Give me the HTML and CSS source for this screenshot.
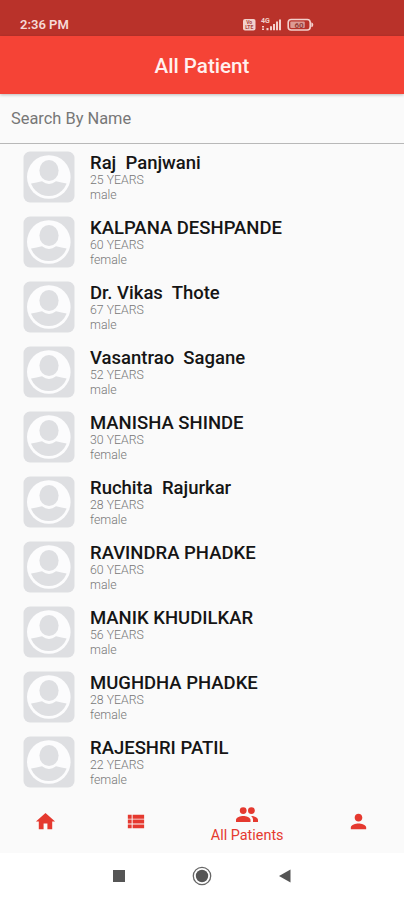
FILE: index.html
```html
<!DOCTYPE html>
<html lang="en">
<head>
<meta charset="utf-8">
<title>All Patient</title>
<link rel="stylesheet" href="styles.css">
</head>
<body>
<svg class="defs" aria-hidden="true">
  <symbol id="avatar" viewBox="0 0 52 52">
    <rect x=".5" y=".5" width="51" height="51" rx="6.5" fill="#dedfe2"/>
    <circle cx="25.8" cy="26" r="21.8" fill="#fcfcfd"/>
    <clipPath id="disc"><circle cx="25.8" cy="26.3" r="18.8"/></clipPath>
    <g fill="#dedfe2">
      <ellipse cx="26" cy="19.500" rx="9.600" ry="10.600"/>
      <path clip-path="url(#disc)" d="M4 33 Q13 32 19 30.300 Q26 35.500 33 30.300 Q39 32 48 33 V48 H4z"/>
    </g>
  </symbol>
</svg>
<div class="status">
  <span class="time">2:36 PM</span>
  <svg class="indicators" width="74" height="16" viewBox="0 0 74 16">
    <rect x="1" y="3" width="12.5" height="11.5" rx="2" fill="#f3d0cc"/>
    <text x="7.2" y="8.4" class="tiny dark">Vo</text>
    <text x="7.2" y="13.3" class="tiny dark">LTE</text>
    <text x="23.5" y="7" class="tiny light">4G</text>
    <path fill="#f3d0cc" d="M20 10h2v1.500h-2zM20 12.500h2V14h-2zM24.500 12h2v2.300h-2zM28 10.200h2v4.100h-2zM31 8h2v6.300h-2zM34 5.500h2v8.800h-2zM37 3.500h2v10.800h-2z"/>
    <rect x="46.2" y="3.5" width="22" height="10.5" rx="3" fill="none" stroke="#f3d0cc" stroke-width="1.6"/>
    <path fill="#f3d0cc" d="M69.300 6.300q2 .5 2 2.500t-2 2.500z"/>
    <rect x="48.3" y="5.5" width="14.500" height="6.500" rx="1" fill="#dc9a94"/>
    <text x="57" y="11.700" class="charge">60</text>
  </svg>
</div>
<header class="appbar">All Patient</header>
<div class="search">Search By Name</div>
<main class="list">
  <article class="row"><svg class="avatar"><use href="#avatar"/></svg><div><h2>Raj&nbsp; Panjwani</h2><p>25 YEARS</p><p>male</p></div></article>
  <article class="row"><svg class="avatar"><use href="#avatar"/></svg><div><h2>KALPANA DESHPANDE</h2><p>60 YEARS</p><p>female</p></div></article>
  <article class="row"><svg class="avatar"><use href="#avatar"/></svg><div><h2>Dr. Vikas&nbsp; Thote</h2><p>67 YEARS</p><p>male</p></div></article>
  <article class="row"><svg class="avatar"><use href="#avatar"/></svg><div><h2>Vasantrao&nbsp; Sagane</h2><p>52 YEARS</p><p>male</p></div></article>
  <article class="row"><svg class="avatar"><use href="#avatar"/></svg><div><h2>MANISHA SHINDE</h2><p>30 YEARS</p><p>female</p></div></article>
  <article class="row"><svg class="avatar"><use href="#avatar"/></svg><div><h2>Ruchita&nbsp; Rajurkar</h2><p>28 YEARS</p><p>female</p></div></article>
  <article class="row"><svg class="avatar"><use href="#avatar"/></svg><div><h2>RAVINDRA PHADKE</h2><p>60 YEARS</p><p>male</p></div></article>
  <article class="row"><svg class="avatar"><use href="#avatar"/></svg><div><h2>MANIK KHUDILKAR</h2><p>56 YEARS</p><p>male</p></div></article>
  <article class="row"><svg class="avatar"><use href="#avatar"/></svg><div><h2>MUGHDHA PHADKE</h2><p>28 YEARS</p><p>female</p></div></article>
  <article class="row"><svg class="avatar"><use href="#avatar"/></svg><div><h2>RAJESHRI PATIL</h2><p>22 YEARS</p><p>female</p></div></article>
</main>
<nav class="tabs">
  <a class="tab"><svg viewBox="0 0 24 24"><path d="M10 20v-6h4v6h5v-8h3L12 3 2 12h3v8z"/></svg></a>
  <a class="tab"><svg viewBox="0 0 24 24"><path d="M4 14h4v-4H4v4zm0 5h4v-4H4v4zM4 9h4V5H4v4zm5 5h12v-4H9v4zm0 5h12v-4H9v4zM9 5v4h12V5H9z"/></svg></a>
  <a class="tab active"><svg viewBox="0 0 24 24"><circle cx="8.2" cy="7.6" r="3.4"/><circle cx="16.4" cy="7.6" r="3.4"/><path d="M8.200 13C5.500 13 1 14.300 1 16.800V19h14.500v-2.200C15.500 14.300 11 13 8.200 13zM16 13c1.300 1 2 2.200 2 3.800V19h5v-2.200C23 14.500 19 13.100 16 13z"/></svg><span>All Patients</span></a>
  <a class="tab"><svg viewBox="0 0 24 24"><path d="M12 12c2.210 0 4-1.790 4-4s-1.790-4-4-4-4 1.790-4 4 1.790 4 4 4zm0 2c-2.670 0-8 1.340-8 4v2h16v-2c0-2.660-5.330-4-8-4z"/></svg></a>
</nav>
<div class="system">
  <svg width="14" height="14"><rect x="1" y="1" width="12" height="12" fill="#555"/></svg>
  <svg width="20" height="20"><circle cx="10" cy="10" r="8.700" fill="none" stroke="#666" stroke-width="1.300"/><circle cx="10" cy="10" r="6.200" fill="#555"/></svg>
  <svg width="14" height="14"><path d="M1 7L12.500 .5v13z" fill="#555"/></svg>
</div>
</body>
</html>
```
FILE: styles.css
```css
* { box-sizing: border-box; }
body {
  margin: 0;
  height: 900px;
  overflow: hidden;
  display: flex;
  flex-direction: column;
  background: #fafafa;
  font-family: Roboto, "Liberation Sans", sans-serif;
}
.defs { position: absolute; width: 0; height: 0; }
.status {
  flex: none;
  height: 36px;
  padding: 13px 88px 0 20px;
  display: flex;
  justify-content: space-between;
  background: #b9322a;
}
.time { color: #f6dad7; font-size: 13px; font-weight: 600; line-height: 24px; }
.indicators { margin-top: 3px; }
.tiny { font-size: 5px; font-weight: 700; text-anchor: middle; }
.dark { fill: #a9443d; }
.light { fill: #f3d0cc; font-size: 7px; }
.charge { font-size: 8px; font-weight: 700; text-anchor: middle; fill: #943e38; }
.appbar {
  flex: none;
  height: 58px;
  background: #f54336;
  color: #fff0ee;
  font-size: 20.6px;
  font-weight: 500;
  line-height: 60px;
  text-align: center;
  box-shadow: 0 1px 3px rgba(0, 0, 0, .25);
}
.search {
  flex: none;
  height: 50px;
  padding-left: 11px;
  border-bottom: 1px solid #b8b8b8;
  color: #777;
  font-size: 16.4px;
  line-height: 49px;
}
.list { flex: none; height: 644px; padding-top: 7px; overflow: hidden; }
.row { display: flex; height: 65px; padding-left: 23px; }
.avatar { width: 52px; height: 52px; margin-right: 15px; }
h2 { margin: 0; padding-top: 1px; height: 22px; color: #151515; font-size: 18.5px; font-weight: 500; line-height: 22px; white-space: nowrap; }
p { margin: 0; color: #777; font-size: 12.3px; font-weight: 300; line-height: 14.5px; }
.tabs { flex: none; display: flex; height: 65px; color: #e5392f; }
.tab { width: 90.5px; padding-top: 1px; display: flex; flex-direction: column; align-items: center; justify-content: center; }
.tab svg { width: 23px; height: 23px; fill: currentColor; }
.active { width: 133px; padding-top: 5px; font-size: 14.4px; line-height: 17px; }
.active svg { width: 24px; height: 24px; }
.system {
  flex: none;
  height: 47px;
  padding: 0 112px 2px;
  display: flex;
  align-items: center;
  justify-content: space-between;
  background: #fff;
}
```
